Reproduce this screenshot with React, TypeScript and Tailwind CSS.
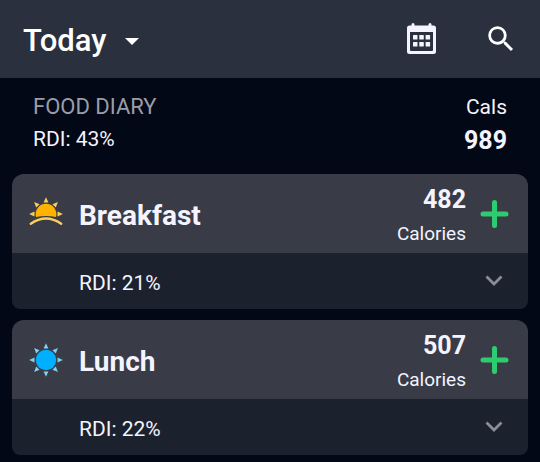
import React from "react";

function CalendarIcon() {
  return (
    <svg viewBox="0 0 34 34" className="size-[34px]" aria-hidden="true">
      <path
        fill="#f3f4ff"
        fillRule="evenodd"
        d="M8 1a1.500 1.500 0 0 1 1.500 1.500V3.500h14V2.500a1.500 1.500 0 0 1 3 0V3.500H28.500a2.500 2.500 0 0 1 2.500 2.500v23.500a2.500 2.500 0 0 1-2.500 2.500h-24A2.500 2.500 0 0 1 2 29.500V6A2.500 2.500 0 0 1 4.500 3.500h2V2.500A1.500 1.500 0 0 1 8 1ZM5 10v18a1 1 0 0 0 1 1h21a1 1 0 0 0 1-1V10Z"
      />
      <g fill="#f3f4ff">
        {[13, 20].map((y) =>
          [8, 14.3, 20.6].map((x) => (
            <rect key={`${x}-${y}`} x={x} y={y} width="4.500" height="4.500" rx="0.600" />
          )),
        )}
      </g>
    </svg>
  );
}

function SearchIcon() {
  return (
    <svg viewBox="0 0 24 24" className="size-[34px]" fill="#fff" aria-hidden="true">
      <path d="M15.500 14h-.79l-.28-.27A6.471 6.471 0 0 0 16 9.500 6.500 6.500 0 1 0 9.500 16c1.610 0 3.090-.59 4.230-1.570l.27.28v.79l5 4.990L20.490 19l-4.990-5zm-6 0C7.010 14 5 11.990 5 9.500S7.010 5 9.500 5 14 7.010 14 9.500 11.990 14 9.500 14z" />
    </svg>
  );
}

const sunRays = [0, 45, 90, 135, 180, 225, 270, 315];
const dawnRays = [270, 315, 0, 45, 90];

function SunriseIcon() {
  return (
    <svg viewBox="0 0 34 34" className="size-[34px]" aria-hidden="true">
      <g fill="#f8cf62">
        {dawnRays.map((a) => (
          <path key={a} d="M17 .2 19.400 5.500H14.600Z" transform={`rotate(${a} 17 17)`} />
        ))}
      </g>
      <path d="M7 20A10.400 10.400 0 1 1 27 20Q17 17.800 7 20Z" fill="#ffb300" />
      <path d="M1.800 26.800Q17 16.200 32.200 26.800" fill="none" stroke="#f8cf62" strokeWidth="2.400" strokeLinecap="round" />
    </svg>
  );
}

function SunIcon() {
  return (
    <svg viewBox="0 0 34 34" className="size-[34px]" aria-hidden="true">
      <g fill="#82d0ed">
        {sunRays.map((a) => (
          <path key={a} d="M17 .2 19.400 5.500H14.600Z" transform={`rotate(${a} 17 17)`} />
        ))}
      </g>
      <circle cx="17" cy="17" r="10.200" fill="#00b0ff" />
    </svg>
  );
}

function Meal({ name, calories, rdi, icon }: { name: string; calories: number; rdi: number; icon: React.ReactNode }) {
  return (
    <section className="overflow-hidden rounded-t-xl rounded-b-lg bg-[#1c212e]">
      <div className="flex h-[79px] items-center bg-[#393b47] pr-[18px] pl-[17px]">
        {icon}
        <h2 className="ml-4 flex-1 pt-1 text-[28px] leading-8 font-bold">{name}</h2>
        <p className="pt-1 text-right">
          <span className="block text-[25px] leading-9 font-bold">{calories}</span>
          <span className="block text-[19px] leading-8">Calories</span>
        </p>
        <button type="button" aria-label={`Add to ${name}`} className="ml-3">
          <svg viewBox="0 0 32 32" className="size-8" fill="none" stroke="#2ecc71" strokeWidth="5" strokeLinecap="round" aria-hidden="true">
            <path d="M16.500 4.500v23M5 16h23" />
          </svg>
        </button>
      </div>
      <div className="flex h-14 items-center justify-between pr-[25px] pl-[67px]">
        <p className="pt-1 text-[21px] leading-7">RDI: {rdi}%</p>
        <button type="button" aria-label={`Show ${name} details`}>
          <svg viewBox="0 0 18 12" className="h-3 w-[18px]" fill="none" stroke="#898d98" strokeWidth="2.800" aria-hidden="true">
            <path d="m1.500 1.500 7.500 7.500 7.500-7.500" />
          </svg>
        </button>
      </div>
    </section>
  );
}

export default function App() {
  return (
    <div className="min-h-screen bg-[#020815] pb-[7px] font-[Roboto,sans-serif] text-[#f3f4ff]">
      <header className="flex h-[78px] items-center bg-[#2a303e] pr-[22px] pl-[23px] text-white">
        <button type="button" className="flex items-center gap-[18px] pt-1 text-[31px] leading-9 font-medium">
          Today
          <svg viewBox="0 0 14 7" className="h-[7px] w-[14px]" fill="currentColor" aria-hidden="true">
            <path d="M0 0h14L7 7Z" />
          </svg>
        </button>
        <button type="button" aria-label="Open calendar" className="ml-auto">
          <CalendarIcon />
        </button>
        <button type="button" aria-label="Search" className="ml-[45px]">
          <SearchIcon />
        </button>
      </header>
      <main className="px-3">
        <div className="flex h-24 justify-between px-[21px] pt-[13px]">
          <div className="leading-8">
            <h1 className="text-[22px] leading-8 text-[#9a9da8]">FOOD DIARY</h1>
            <p className="text-[21px] leading-8">RDI: 43%</p>
          </div>
          <p className="text-right">
            <span className="block text-[21px] leading-8">Cals</span>
            <span className="block text-[25px] leading-9 font-bold">989</span>
          </p>
        </div>
        <div className="flex flex-col gap-[11px]">
          <Meal name="Breakfast" calories={482} rdi={21} icon={<SunriseIcon />} />
          <Meal name="Lunch" calories={507} rdi={22} icon={<SunIcon />} />
        </div>
      </main>
    </div>
  );
}
